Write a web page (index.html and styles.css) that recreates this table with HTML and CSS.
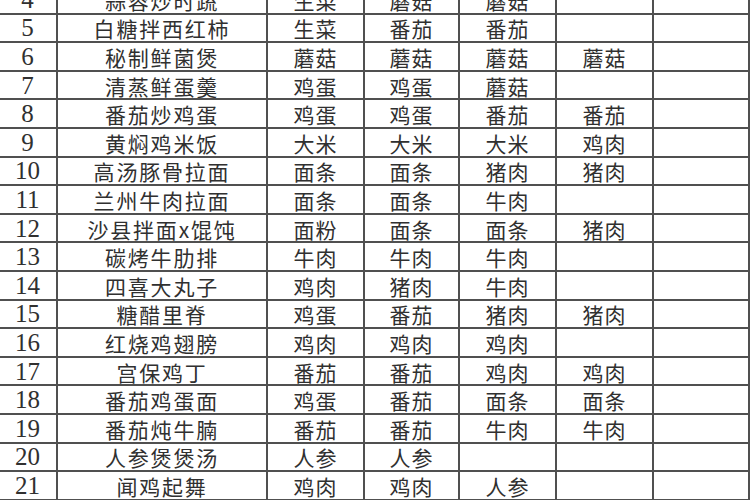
FILE: index.html
```html
<!DOCTYPE html>
<html lang="zh-CN">
<head>
<meta charset="utf-8">
<link rel="stylesheet" href="styles.css">
</head>
<body>
<table class="sheet">
  <colgroup>
    <col class="c-no"><col class="c-name"><col class="c-a"><col class="c-b"><col class="c-c"><col class="c-d"><col class="c-e">
  </colgroup>
  <tbody>
    <tr><td class="no">4</td><td class="name">蒜蓉炒时蔬</td><td>生菜</td><td>蘑菇</td><td>蘑菇</td><td></td><td></td></tr>
    <tr><td class="no">5</td><td class="name">白糖拌西红柿</td><td>生菜</td><td>番茄</td><td>番茄</td><td></td><td></td></tr>
    <tr><td class="no">6</td><td class="name">秘制鲜菌煲</td><td>蘑菇</td><td>蘑菇</td><td>蘑菇</td><td>蘑菇</td><td></td></tr>
    <tr><td class="no">7</td><td class="name">清蒸鲜蛋羹</td><td>鸡蛋</td><td>鸡蛋</td><td>蘑菇</td><td></td><td></td></tr>
    <tr><td class="no">8</td><td class="name">番茄炒鸡蛋</td><td>鸡蛋</td><td>鸡蛋</td><td>番茄</td><td>番茄</td><td></td></tr>
    <tr><td class="no">9</td><td class="name">黄焖鸡米饭</td><td>大米</td><td>大米</td><td>大米</td><td>鸡肉</td><td></td></tr>
    <tr><td class="no">10</td><td class="name">高汤豚骨拉面</td><td>面条</td><td>面条</td><td>猪肉</td><td>猪肉</td><td></td></tr>
    <tr><td class="no">11</td><td class="name">兰州牛肉拉面</td><td>面条</td><td>面条</td><td>牛肉</td><td></td><td></td></tr>
    <tr><td class="no">12</td><td class="name">沙县拌面x馄饨</td><td>面粉</td><td>面条</td><td>面条</td><td>猪肉</td><td></td></tr>
    <tr><td class="no">13</td><td class="name">碳烤牛肋排</td><td>牛肉</td><td>牛肉</td><td>牛肉</td><td></td><td></td></tr>
    <tr><td class="no">14</td><td class="name">四喜大丸子</td><td>鸡肉</td><td>猪肉</td><td>牛肉</td><td></td><td></td></tr>
    <tr><td class="no">15</td><td class="name">糖醋里脊</td><td>鸡蛋</td><td>番茄</td><td>猪肉</td><td>猪肉</td><td></td></tr>
    <tr><td class="no">16</td><td class="name">红烧鸡翅膀</td><td>鸡肉</td><td>鸡肉</td><td>鸡肉</td><td></td><td></td></tr>
    <tr><td class="no">17</td><td class="name">宫保鸡丁</td><td>番茄</td><td>番茄</td><td>鸡肉</td><td>鸡肉</td><td></td></tr>
    <tr><td class="no">18</td><td class="name">番茄鸡蛋面</td><td>鸡蛋</td><td>番茄</td><td>面条</td><td>面条</td><td></td></tr>
    <tr><td class="no">19</td><td class="name">番茄炖牛腩</td><td>番茄</td><td>番茄</td><td>牛肉</td><td>牛肉</td><td></td></tr>
    <tr><td class="no">20</td><td class="name">人参煲煲汤</td><td>人参</td><td>人参</td><td></td><td></td><td></td></tr>
    <tr><td class="no">21</td><td class="name">闻鸡起舞</td><td>鸡肉</td><td>鸡肉</td><td>人参</td><td></td><td></td></tr>
  </tbody>
</table>
</body>
</html>
```

FILE: styles.css
```css
html, body {
  margin: 0;
  padding: 0;
  background: #ffffff;
  overflow: hidden;
}

.sheet {
  border-collapse: collapse;
  table-layout: fixed;
  width: 751px;
  margin-top: -16px;
  margin-left: -3px;
  color: #303030;
  font-family: "Noto Sans CJK SC", "Liberation Serif", sans-serif;
  font-size: 21px;
}

.c-no { width: 59px; }
.c-name { width: 210px; }
.c-a { width: 97px; }
.c-b { width: 95px; }
.c-c { width: 97px; }
.c-d { width: 97px; }
.c-e { width: 96px; }

.sheet tr {
  height: 28.6px;
}

.sheet td {
  border: 2px solid #505050;
  padding: 1px 0 0;
  text-align: center;
  vertical-align: middle;
  line-height: 24px;
  letter-spacing: 1px;
  white-space: nowrap;
  overflow: hidden;
}

.sheet td.name {
  letter-spacing: 1.8px;
}

.sheet td.no {
  font-family: "Liberation Serif", serif;
  font-size: 25px;
  letter-spacing: 0;
}
```
